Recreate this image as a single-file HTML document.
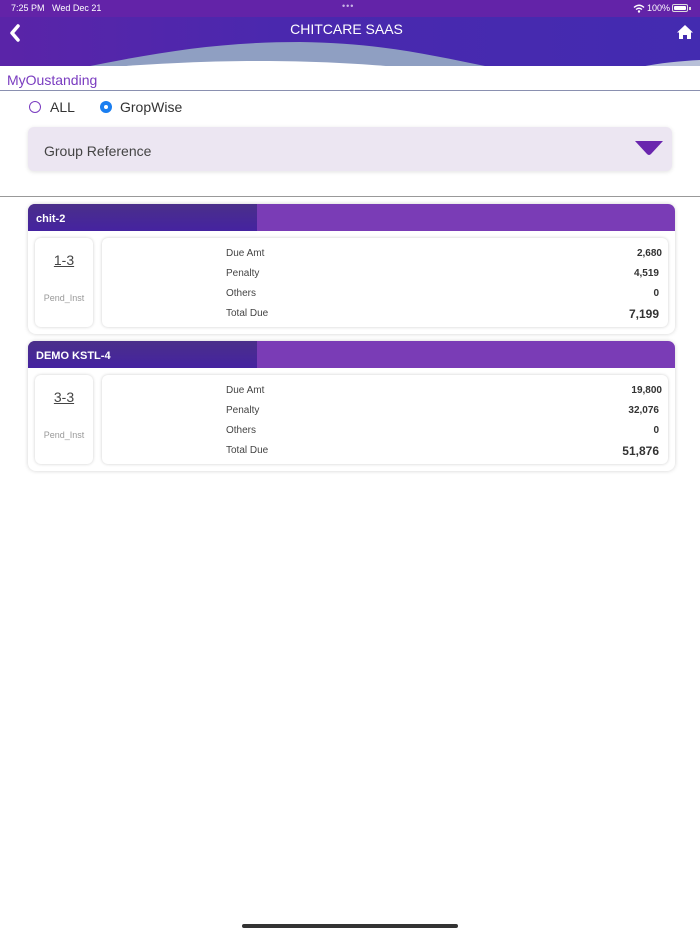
<!DOCTYPE html>
<html><head><meta charset="utf-8"><style>
*{margin:0;padding:0;box-sizing:border-box}
body{width:700px;height:934px;background:#fff;font-family:"Liberation Sans",sans-serif;position:relative;overflow:hidden}
.abs{position:absolute}
.card{position:absolute;left:28px;width:647px;border-radius:8px;background:#fff;box-shadow:0 0 4px rgba(0,0,0,.18)}
.hd{height:27px;border-radius:7px 7px 0 0;background:#7a3cb6;position:relative;overflow:hidden}
.hd .dk{position:absolute;left:0;top:0;width:229px;height:27px;background:linear-gradient(180deg,#4a2f8a,#4523a0)}
.hd span{position:absolute;left:8px;top:9px;color:#fff;font-size:11px;font-weight:bold}
.lb{position:absolute;left:7px;top:34px;width:58px;height:89px;border-radius:6px;box-shadow:0 0 3px rgba(0,0,0,.2);background:#fff;text-align:center}
.lb .n{margin-top:14px;font-size:14px;color:#444;text-decoration:underline}
.lb .p{margin-top:25px;font-size:9px;color:#999}
.rb{position:absolute;left:74px;top:34px;width:566px;height:89px;border-radius:6px;box-shadow:0 0 3px rgba(0,0,0,.2);background:#fff}
.row{position:absolute;left:0;width:566px;font-size:10px;color:#444}
.row .l{position:absolute;left:124px}
.row .v{position:absolute;right:6px;font-weight:bold;color:#333}
</style></head><body>
<div class="abs" style="left:0;top:0;width:700px;height:17px;background:#6323a8"></div>
<div class="abs" style="left:0;top:17px;width:700px;height:50px;background:linear-gradient(90deg,#5a24a8,#4a28ae 40%,#432bb0)"></div>
<svg class="abs" style="left:0;top:0" width="700" height="70">
<path d="M85 67 C160 52 220 42 300 42 C380 43 430 55 490 67 Z" fill="#8f9fc2"/>
<path d="M110 67 C170 63 210 61 260 61 C320 61 360 64 400 67 Z" fill="#fff"/>
<path d="M640 67 C660 63 680 61 700 60 L700 67 Z" fill="#b8c0d8"/>
<rect x="0" y="66" width="700" height="4" fill="#fff"/>
</svg>
<div class="abs" style="left:11px;top:3px;color:#fff;font-size:9px">7:25 PM&nbsp;&nbsp; Wed Dec 21</div>
<div class="abs" style="left:342px;top:1px;color:#c9b5e6;font-size:9px;letter-spacing:1px">•••</div>
<svg class="abs" style="left:633px;top:4px" width="12" height="9"><path d="M1 3.5 Q6 -1 11 3.5 M3 5.5 Q6 3 9 5.5" stroke="#fff" stroke-width="1.4" fill="none"/><circle cx="6" cy="7.5" r="1.2" fill="#fff"/></svg>
<div class="abs" style="left:647px;top:3px;color:#fff;font-size:9px">100%</div>
<div class="abs" style="left:672px;top:4px;width:16px;height:8px;border:1px solid #ddd;border-radius:2px;padding:1px"><div style="background:#fff;width:100%;height:100%;border-radius:1px"></div></div>
<div class="abs" style="left:689px;top:7px;width:1.5px;height:3px;background:#ddd"></div>
<svg class="abs" style="left:8px;top:24px" width="14" height="18"><path d="M10 2 L4 9 L10 16" stroke="#fff" stroke-width="3.5" fill="none" stroke-linecap="round" stroke-linejoin="round"/></svg>
<div class="abs" style="left:0;top:21px;width:693px;text-align:center;color:#fff;font-size:14px">CHITCARE SAAS</div>
<svg class="abs" style="left:676px;top:24px" width="18" height="16"><path d="M9 1 L1 8.5 L3 8.5 L3 15 L7 15 L7 11 L11 11 L11 15 L15 15 L15 8.5 L17 8.5 Z" fill="#fff"/></svg>
<div class="abs" style="left:7px;top:72px;color:#7a3cc0;font-size:14px">MyOustanding</div>
<div class="abs" style="left:0;top:90px;width:700px;height:1px;background:#8a90b0"></div>
<div class="abs" style="left:29px;top:101px;width:12px;height:12px;border:1.5px solid #7a3cc0;border-radius:50%"></div>
<div class="abs" style="left:50px;top:99px;font-size:14px;color:#333">ALL</div>
<div class="abs" style="left:100px;top:101px;width:12px;height:12px;background:#1a7ef0;border-radius:50%"><div style="width:4px;height:4px;background:#fff;border-radius:50%;margin:4px"></div></div>
<div class="abs" style="left:120px;top:99px;font-size:14px;color:#333">GropWise</div>
<div class="abs" style="left:28px;top:127px;width:644px;height:44px;background:#ece6f2;border-radius:6px;box-shadow:0 1px 4px rgba(0,0,0,.12)"></div>
<div class="abs" style="left:44px;top:143px;font-size:14px;color:#444">Group Reference</div>
<svg class="abs" style="left:634px;top:140px" width="30" height="16"><path d="M1 1 L29 1 L17 14 Q15 16 13 14 Z" fill="#6a26ae"/></svg>
<div class="abs" style="left:0;top:196px;width:700px;height:1px;background:#999"></div>

<div class="card" style="top:204px;height:130px">
<div class="hd"><div class="dk"></div><span>chit-2</span></div>
<div class="lb"><div class="n">1-3</div><div class="p">Pend_Inst</div></div>
<div class="rb">
<div class="row" style="top:10px"><span class="l">Due Amt</span><span class="v">2,680</span></div>
<div class="row" style="top:30px"><span class="l">Penalty</span><span class="v" style="right:9px">4,519</span></div>
<div class="row" style="top:50px"><span class="l">Others</span><span class="v" style="right:9px">0</span></div>
<div class="row" style="top:70px"><span class="l">Total Due</span><span class="v" style="right:9px;font-size:12px;top:-1px">7,199</span></div>
</div></div>

<div class="card" style="top:341px;height:130px">
<div class="hd"><div class="dk"></div><span>DEMO KSTL-4</span></div>
<div class="lb"><div class="n">3-3</div><div class="p">Pend_Inst</div></div>
<div class="rb">
<div class="row" style="top:10px"><span class="l">Due Amt</span><span class="v">19,800</span></div>
<div class="row" style="top:30px"><span class="l">Penalty</span><span class="v" style="right:9px">32,076</span></div>
<div class="row" style="top:50px"><span class="l">Others</span><span class="v" style="right:9px">0</span></div>
<div class="row" style="top:70px"><span class="l">Total Due</span><span class="v" style="right:9px;font-size:12px;top:-1px">51,876</span></div>
</div></div>

<div class="abs" style="left:242px;top:924px;width:216px;height:4px;background:#333;border-radius:2px"></div>
</body></html>
